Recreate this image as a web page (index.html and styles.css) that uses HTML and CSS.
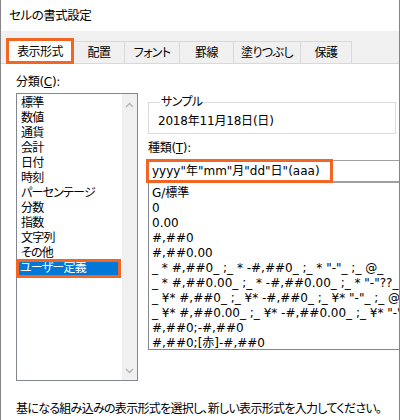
FILE: index.html
```html
<!DOCTYPE html>
<html>
<head>
  <title>セルの書式設定</title>
  <meta charset="utf-8">
  <link rel="stylesheet" href="styles.css">
</head>
<body>
  <div class="window">
    <div class="title">セルの書式設定</div>

    <div class="tabstrip">
      <div class="tab active">表示形式</div>
      <div class="tab w51">配置</div>
      <div class="tab w55">フォント</div>
      <div class="tab w54">罫線</div>
      <div class="tab w67">塗りつぶし</div>
      <div class="tab w51">保護</div>
    </div>

    <div class="page">
      <div class="columns">
        <div class="left">
          <div class="label">分類(<u>C</u>):</div>
          <div class="listbox">
            <ul class="items">
              <li>標準</li>
              <li>数値</li>
              <li>通貨</li>
              <li>会計</li>
              <li>日付</li>
              <li>時刻</li>
              <li>パーセンテージ</li>
              <li>分数</li>
              <li>指数</li>
              <li>文字列</li>
              <li>その他</li>
              <li class="selected">ユーザー定義</li>
            </ul>
            <div class="scrollbar">
              <svg width="9" height="6" viewBox="0 0 9 6"><path d="M1 5 L4.5 1.5 L8 5" fill="none" stroke="#b4b4b4" stroke-width="1.4"/></svg>
              <svg width="9" height="6" viewBox="0 0 9 6"><path d="M1 1 L4.5 4.5 L8 1" fill="none" stroke="#b4b4b4" stroke-width="1.4"/></svg>
            </div>
          </div>
        </div>

        <div class="right">
          <fieldset class="sample">
            <legend>サンプル</legend>
            <div class="sample-value">2018年11月18日(日)</div>
          </fieldset>

          <div class="label type-label">種類(<u>T</u>):</div>
          <div class="input-wrap">
            <div class="input">yyyy"年"mm"月"dd"日"(aaa)</div>
            <span class="mark"></span>
          </div>
          <ul class="formats">
            <li>G/標準</li>
            <li>0</li>
            <li>0.00</li>
            <li>#,##0</li>
            <li>#,##0.00</li>
            <li>_ * #,##0_ ;_ * -#,##0_ ;_ * "-"_ ;_ @_</li>
            <li>_ * #,##0.00_ ;_ * -#,##0.00_ ;_ * "-"??_ ;_ @_</li>
            <li>_ ¥* #,##0_ ;_ ¥* -#,##0_ ;_ ¥* "-"_ ;_ @_</li>
            <li>_ ¥* #,##0.00_ ;_ ¥* -#,##0.00_ ;_ ¥* "-"??_ ;_ @_</li>
            <li>#,##0;-#,##0</li>
            <li>#,##0;[赤]-#,##0</li>
          </ul>
        </div>
      </div>

      <div class="hint">基になる組み込みの表示形式を選択し、新しい表示形式を入力してください。</div>
    </div>
  </div>
</body>
</html>
```

FILE: styles.css
```css
body {
  margin: 0;
  padding: 0;
  background-color: #fff;
  font-family: "DejaVu Sans", "Noto Sans CJK JP", sans-serif;
  font-size: 12px;
  font-feature-settings: "palt";
  color: #000;
}
.window {
  width: 400px;
  height: 420px;
  box-sizing: border-box;
  border-left: 1px solid #858585;
  border-right: 1px solid #858585;
  overflow: hidden;
}
.title {
  height: 31px;
  line-height: 31px;
  padding-left: 8px;
  font-size: 12.5px;
  letter-spacing: -0.5px;
}
.tabstrip {
  display: flex;
  align-items: flex-end;
  height: 32px;
  padding-left: 5px;
  background-color: #f0f0f0;
  border-bottom: 1px solid #d9d9d9;
  letter-spacing: -0.6px;
}
.tab {
  height: 23px;
  line-height: 22px;
  box-sizing: border-box;
  text-align: center;
  border: 1px solid #d9d9d9;
  border-bottom: none;
  margin-left: -1px;
  margin-bottom: -1px;
}
.tab.active {
  width: 68px;
  height: 26px;
  line-height: 22px;
  margin-left: 0;
  background-color: #fff;
  border: 3px solid #f26522;
  position: relative;
  z-index: 1;
}
.w51 { width: 52px; }
.w54 { width: 55px; }
.w55 { width: 56px; }
.w67 { width: 68px; }

.page {
  padding: 0 0 0 15px;
}
.columns {
  display: flex;
  gap: 10px;
}
.left {
  width: 122px;
  flex: none;
  padding-top: 11px;
}
.label {
  height: 15px;
  line-height: 15px;
  letter-spacing: -0.3px;
}
.listbox {
  margin-top: 3px;
  height: 288px;
  box-sizing: border-box;
  border: 1px solid #828790;
  display: flex;
}
.items {
  list-style: none;
  margin: 0;
  padding: 2px 2px 0 2px;
  flex: 1;
  letter-spacing: -0.8px;
}
.items li {
  height: 15px;
  line-height: 15px;
  padding-left: 2px;
}
.items li.selected {
  background-color: #0078d7;
  color: #fff;
  outline: 3px solid #f26522;
  outline-offset: -1px;
  margin-left: -1px;
  margin-right: 1px;
}
.scrollbar {
  width: 15px;
  background-color: #f0f0f0;
  display: flex;
  flex-direction: column;
  justify-content: space-between;
  align-items: center;
  padding: 8px 0 6px;
}

.right {
  width: 262px;
  flex: none;
  padding-top: 31px;
}
.sample {
  width: 248px;
  box-sizing: border-box;
  margin: 0;
  padding: 4px 8px 4px 9px;
  border: 1px solid #dcdcdc;
}
.sample legend {
  padding: 0 1px;
  margin-left: 2px;
  line-height: 15px;
  letter-spacing: -0.6px;
}
.sample-value {
  line-height: 15px;
  letter-spacing: -0.2px;
}
.type-label {
  margin-top: 7px;
}
.input-wrap {
  position: relative;
  margin-top: 4px;
}
.input {
  height: 22px;
  line-height: 20px;
  box-sizing: border-box;
  border: 1px solid #a0a0a0;
  padding-left: 3px;
  white-space: nowrap;
}
.mark {
  position: absolute;
  left: -2px;
  top: -1px;
  width: 187px;
  height: 24px;
  box-sizing: border-box;
  border: 3px solid #f26522;
}
.formats {
  list-style: none;
  margin: 0;
  height: 168px;
  box-sizing: border-box;
  padding: 3px 0 0 3px;
  border: 1px solid #828790;
  border-top-color: #a0a0a0;
}
.formats li {
  height: 15px;
  line-height: 15px;
  white-space: nowrap;
}
.hint {
  margin-top: 21px;
  line-height: 15px;
  white-space: nowrap;
  letter-spacing: -0.7px;
}
```
